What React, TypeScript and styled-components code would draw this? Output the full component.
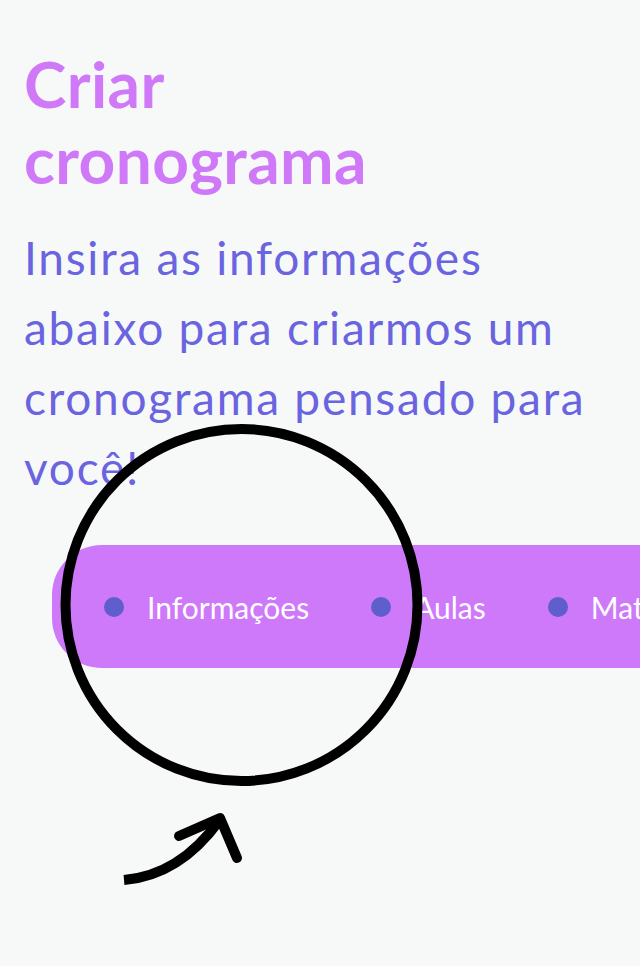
import React from "react";
import styled, { createGlobalStyle } from "styled-components";

const GlobalStyle = createGlobalStyle`
  html, body {
    margin: 0;
    padding: 0;
    background: #f7f9f8;
  }
  body {
    font-family: "Lato", "Noto Sans", sans-serif;
  }
`;

const Page = styled.div`
  position: relative;
  width: 640px;
  min-height: 966px;
  overflow: hidden;
  background: #f7f9f8;
`;

const Header = styled.header`
  padding: 46px 24px 0 24px;
`;

const Title = styled.h1`
  margin: 0;
  font-size: 64px;
  line-height: 76px;
  font-weight: 700;
  letter-spacing: 0.4px;
  color: #cf79f8;
`;

const Description = styled.p`
  margin: 25px 0 0 0;
  max-width: 590px;
  font-size: 46px;
  line-height: 70px;
  font-weight: 400;
  letter-spacing: 1.75px;
  color: #6a64e1;
`;

const Steps = styled.nav`
  display: flex;
  align-items: center;
  gap: 62px;
  width: max-content;
  height: 123px;
  margin: 42px 0 0 52px;
  padding: 0 40px 0 52px;
  border-radius: 50px 0 0 50px;
  background: #ce79f9;
  white-space: nowrap;
`;

const Step = styled.div`
  display: flex;
  align-items: center;
  gap: 23px;
`;

const Dot = styled.span`
  width: 20px;
  height: 20px;
  border-radius: 50%;
  background: #5e5fcd;
  flex-shrink: 0;
`;

const StepLabel = styled.span`
  font-size: 30px;
  line-height: 1;
  color: #ffffff;
  font-weight: 400;
`;

const Overlay = styled.svg`
  position: absolute;
  left: 0;
  top: 0;
  width: 640px;
  height: 966px;
  pointer-events: none;
`;

const steps = ["Informações", "Aulas", "Matérias", "Revisão"];

export default function App() {
  return (
    <>
      <GlobalStyle />
      <Page>
        <Header>
          <Title>
            Criar
            <br />
            cronograma
          </Title>
          <Description>
            Insira as informações abaixo para criarmos um cronograma pensado
            para você!
          </Description>
        </Header>
        <Steps>
          {steps.map((s) => (
            <Step key={s}>
              <Dot />
              <StepLabel>{s}</StepLabel>
            </Step>
          ))}
        </Steps>
        <Overlay viewBox="0 0 640 966">
          <circle cx="241.5" cy="605" r="176" fill="none" stroke="#000" strokeWidth="10" />
          <path
            d="M124 880 C 160 877, 192 858, 219 821"
            fill="none"
            stroke="#000"
            strokeWidth="10"
          />
          <path
            d="M179 836 L 220 818 L 237 858"
            fill="none"
            stroke="#000"
            strokeWidth="10"
            strokeLinecap="round"
            strokeLinejoin="round"
          />
        </Overlay>
      </Page>
    </>
  );
}
